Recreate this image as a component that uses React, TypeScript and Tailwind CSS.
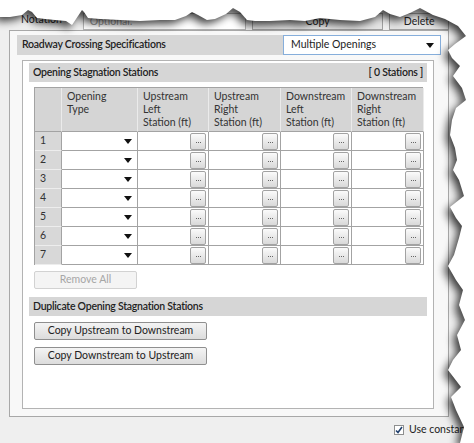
import React from "react";

const rows = [1, 2, 3, 4, 5, 6, 7];

const headers = [
  "",
  "Opening\nType",
  "Upstream\nLeft\nStation (ft)",
  "Upstream\nRight\nStation (ft)",
  "Downstream\nLeft\nStation (ft)",
  "Downstream\nRight\nStation (ft)",
];

const tearPath =
  "M0,0 L474,0 L474,443 L460,443 L464,427 L456,410 L451,397 L461,387 L448,370 L453,360 L461,350 L457,335 L465,320 L459,305 L463,290 L456,280 L448,266 L454,255 L459,238 L462,226 L456,218 L450,207 L464,196 L459,180 L453,170 L457,160 L455,148 L450,135 L452,120 L456,108 L466,100 L462,88 L453,76 L460,66 L452,58 L448,50 L455,44 L466,36 L458,26 L445,19 L433,15 L420,8 L410,13 L400,17 L390,14 L383,10 L375,17 L360,21 L340,20 L320,18 L305,21 L290,20 L270,21 L255,21 L247,20 L240,12 L233,8 L226,14 L215,19 L207,20 L198,15 L192,12 L186,16 L175,20 L160,20 L140,21 L120,20 L100,19 L88,18 L84,12 L82,10 L78,16 L72,25 L66,21 L55,20 L45,19 L37,18 L32,12 L28,10 L22,15 L10,17 L0,17 Z";

function DropArrow() {
  return (
    <svg width="8" height="5" viewBox="0 0 8 5" className="shrink-0">
      <path d="M0 0 H8 L4 5 Z" fill="#111" />
    </svg>
  );
}

function EllipsisButton() {
  return (
    <div className="flex h-[17px] w-[16px] items-center justify-center gap-[1px] rounded-[2px] border border-[#a2a2a2] bg-gradient-to-b from-[#fbfbfb] to-[#d9d9d9] pt-[3px]">
      <span className="h-[1px] w-[1px] bg-[#666]" />
      <span className="h-[1px] w-[1px] bg-[#666]" />
      <span className="h-[1px] w-[1px] bg-[#666]" />
    </div>
  );
}

function SectionBar({ title, right }: { title: string; right?: string }) {
  return (
    <div className="flex h-[19px] items-center justify-between bg-[#d6d6d6] px-[4px] font-semibold tracking-[-0.25px] text-[#222]">
      <span>{title}</span>
      {right ? <span>{right}</span> : null}
    </div>
  );
}

function Button({
  label,
  width,
  disabled,
}: {
  label: string;
  width: string;
  disabled?: boolean;
}) {
  return (
    <div
      className={`flex h-[18px] items-center justify-center rounded-[2px] border ${width} ${
        disabled
          ? "border-[#d2d2d2] bg-[#f4f4f4] text-[#a6a6a6]"
          : "border-[#8f8f8f] bg-gradient-to-b from-[#f4f4f4] to-[#dcdcdc] text-[#222]"
      }`}
    >
      {label}
    </div>
  );
}

export default function App() {
  return (
    <div className="relative h-[443px] w-[474px] overflow-hidden bg-[#efefef] font-['Lato',sans-serif] text-[10.5px] text-[#222]">
      <div className="flex w-[449px] flex-col pl-[9px] pt-[11px]">
        {/* top toolbar row, mostly hidden by the torn edge */}
        <div className="flex h-[19px] items-end gap-[6px] pl-[12px]">
          <span className="w-[56px] pb-[2px]">Notation</span>
          <div className="flex h-[17px] w-[164px] items-center border border-[#b5b5b5] bg-white px-[6px] text-[#9a9a9a]">
            Optional:
          </div>
          <div className="flex h-[17px] w-[132px] items-center justify-center border border-[#a0a0a0] bg-[#e4e4e4]">
            Copy
          </div>
          <div className="flex h-[17px] w-[60px] items-center justify-center border border-[#a0a0a0] bg-[#e4e4e4]">
            Delete
          </div>
        </div>

        {/* main panel */}
        <div className="flex h-[387px] flex-col border border-[#a8a8a8] bg-[#f8f8f8] pl-[7px] pr-[7px] pt-[4px]">
          <div className="flex h-[20px] items-center justify-between bg-[#d6d6d6] pl-[5px]">
            <span className="font-semibold tracking-[-0.25px]">Roadway Crossing Specifications</span>
            <div className="flex h-[20px] w-[158px] items-center justify-between border border-[#86aedb] bg-white pl-[7px] pr-[6px]">
              <span>Multiple Openings</span>
              <DropArrow />
            </div>
          </div>

          <div className="ml-[5px] mt-[5px] flex h-[349px] w-[412px] flex-col border border-[#b3b3b3] bg-white px-[6px] pt-[2px]">
            <SectionBar title="Opening Stagnation Stations" right="[ 0 Stations ]" />

            <div className="ml-[5px] mt-[5px] grid w-[389px] grid-cols-[27px_76px_71px_72px_71px_72px] border-l border-t border-[#a3a3a3]">
              {headers.map((h, i) => (
                <div
                  key={i}
                  className="h-[44px] whitespace-pre-line border-b border-r border-b-[#a3a3a3] border-r-[#ebebeb] bg-[#d5d5d5] pl-[5px] pt-[2px] leading-[13px] text-[#333] last:border-r-[#a3a3a3]"
                >
                  {h}
                </div>
              ))}
              {rows.map((r) => (
                <React.Fragment key={r}>
                  <div className="flex h-[19px] items-center border-b border-r border-b-[#ededed] border-r-[#a3a3a3] bg-[#d8d8d8] pl-[5px] text-[#333]">
                    {r}
                  </div>
                  <div className="flex h-[19px] items-center justify-end border-b border-r border-[#a3a3a3] bg-white pr-[5px]">
                    <DropArrow />
                  </div>
                  {[0, 1, 2, 3].map((c) => (
                    <div
                      key={c}
                      className="flex h-[19px] items-center justify-end border-b border-r border-[#a3a3a3] bg-white pr-[2px]"
                    >
                      <EllipsisButton />
                    </div>
                  ))}
                </React.Fragment>
              ))}
            </div>

            <div className="ml-[5px] mt-[6px]">
              <Button label="Remove All" width="w-[103px]" disabled />
            </div>

            <div className="mt-[8px]">
              <SectionBar title="Duplicate Opening Stagnation Stations" />
            </div>

            <div className="ml-[5px] mt-[6px] flex flex-col gap-[7px]">
              <Button label="Copy Upstream to Downstream" width="w-[173px]" />
              <Button label="Copy Downstream to Upstream" width="w-[173px]" />
            </div>
          </div>
        </div>

        {/* footer */}
        <div className="flex h-[26px] items-center justify-end gap-[5px]">
          <div className="flex h-[10px] w-[10px] items-center justify-center border border-[#8e8f8f] bg-white">
            <svg width="8" height="8" viewBox="0 0 8 8">
              <path d="M1 4.5 L3 6.5 L7 1" stroke="#21406e" strokeWidth="1.6" fill="none" />
            </svg>
          </div>
          <span className="w-[40px] whitespace-nowrap">Use constant</span>
        </div>
      </div>

      {/* torn paper edge */}
      <svg
        width="474"
        height="443"
        viewBox="0 0 474 443"
        className="pointer-events-none absolute left-0 top-0 drop-shadow-[-4px_4px_4px_rgba(0,0,0,0.75)]"
      >
        <path d={tearPath} fill="#ffffff" />
      </svg>
    </div>
  );
}
